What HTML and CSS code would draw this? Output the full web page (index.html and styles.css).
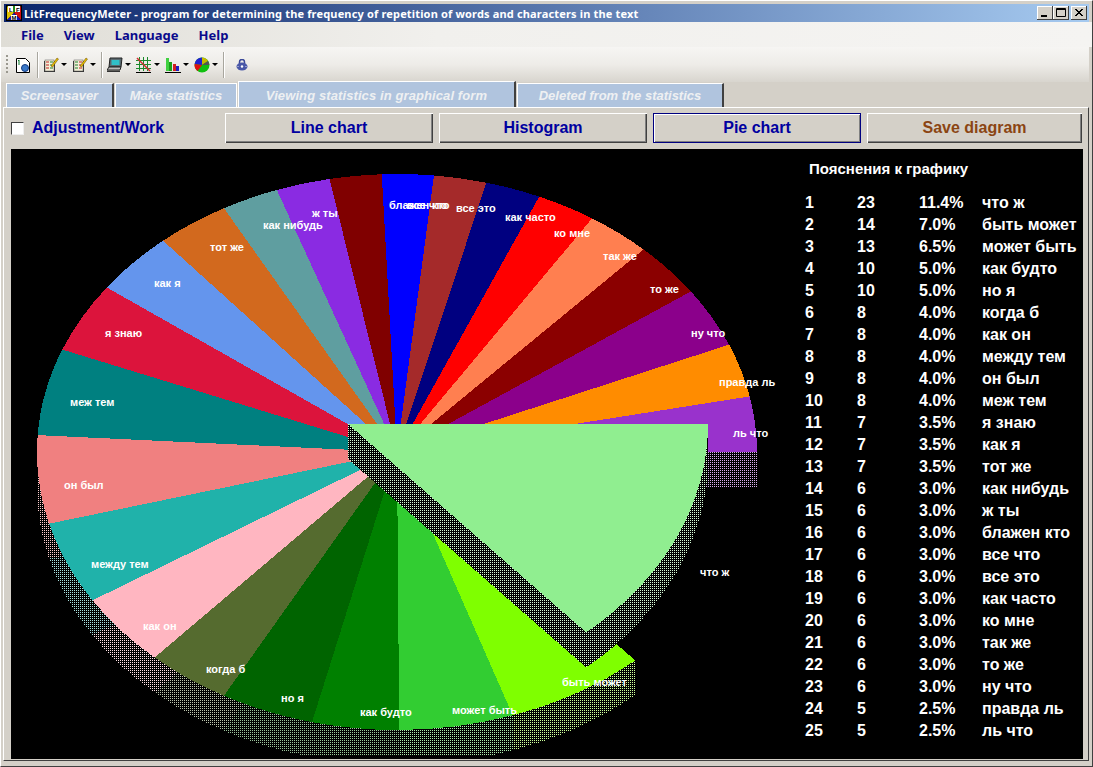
FILE: index.html
```html
<!DOCTYPE html>
<html lang="en">
  <head>
    <meta charset="UTF-8" />
    <title>LitFrequencyMeter</title>
    <link rel="stylesheet" href="styles.css">
  </head>
  <body>
    <div class="window">
      <div class="titlebar">
        <svg class="app-icon" viewBox="0 0 16 16" width="16" height="16">
          <rect width="16" height="16" fill="#000"/>
          <path d="M1 1h14L8 8z" fill="#1c8a1c"/>
          <path d="M1 1v14l7-7z" fill="#e0c000"/>
          <path d="M15 1v14L8 8z" fill="#d01010"/>
          <path d="M1 15h14L8 8z" fill="#1010c0"/>
          <rect x="2" y="1" width="5" height="6" fill="#fff"/>
          <rect x="9" y="1" width="5" height="6" fill="#fff"/>
          <rect x="5" y="10" width="6" height="5" fill="#fff"/>
          <text x="3" y="6.5" class="app-letter">L</text>
          <text x="10" y="6.5" class="app-letter">F</text>
          <text x="5.5" y="14.5" class="app-letter">M</text>
        </svg>
        <span class="title-text">LitFrequencyMeter - program for determining the frequency of repetition of words and characters in the text</span>
        <div class="caption-buttons">
          <button class="caption-btn"><svg viewBox="0 0 16 14" width="16" height="14"><rect x="4" y="9" width="6" height="2" fill="#000"/></svg></button>
          <button class="caption-btn"><svg viewBox="0 0 16 14" width="16" height="14"><path d="M3.5 2.5h9v8h-9z M3 3.5h10" fill="none" stroke="#000"/></svg></button>
          <button class="caption-btn caption-close"><svg viewBox="0 0 16 14" width="16" height="14"><path d="M4 3l7 7M5 3l7 7M11 3l-7 7M12 3l-7 7" stroke="#000" fill="none"/></svg></button>
        </div>
      </div>

      <nav class="menubar">
        <span>File</span>
        <span>View</span>
        <span>Language</span>
        <span>Help</span>
      </nav>

      <div class="toolbar">
        <span class="grip"></span>
        <svg class="tool" viewBox="0 0 16 16" width="16" height="16">
          <path d="M1.5 1.5h9l4 4v10h-13z" fill="#fff" stroke="#000"/>
          <path d="M4 3v5M3 4l1-1" stroke="#0a7a2a" fill="none"/>
          <circle cx="10" cy="11" r="3.5" fill="#3a78c8" stroke="#123a80"/>
        </svg>
        <span class="sep"></span>
        <span class="tool-drop">
          <svg class="tool" viewBox="0 0 16 16" width="16" height="16">
            <path d="M1 4h11v11H1z" fill="#333"/>
            <rect x="2" y="3" width="9" height="11" fill="#f4f0d8" stroke="#555" stroke-width=".5"/>
            <path d="M3 5h3M3 8h3M3 11h3" stroke="#c02020"/>
            <path d="M7 5h3M7 8h2M7 11h3" stroke="#208030"/>
            <path d="M8 9l6-8 1.500 1-6 8z" fill="#e8c000" stroke="#604000" stroke-width=".5"/>
          </svg>
          <i class="arrow"></i>
        </span>
        <span class="tool-drop">
          <svg class="tool" viewBox="0 0 16 16" width="16" height="16">
            <path d="M1 4h11v11H1z" fill="#333"/>
            <rect x="2" y="3" width="9" height="11" fill="#f4f0d8" stroke="#555" stroke-width=".5"/>
            <path d="M3 5h3M3 8h3M3 11h3" stroke="#208030"/>
            <path d="M7 5h3M7 8h2M7 11h3" stroke="#c02020"/>
            <path d="M8 9l6-8 1.500 1-6 8z" fill="#e8c000" stroke="#604000" stroke-width=".5"/>
          </svg>
          <i class="arrow"></i>
        </span>
        <span class="sep sep-wide"></span>
        <span class="tool-drop">
          <svg class="tool" viewBox="0 0 16 16" width="16" height="16">
            <path d="M3 1h12l-1 9H2z" fill="#5a6a70" stroke="#222"/>
            <rect x="4.500" y="3" width="8" height="5" fill="#30c0c8"/>
            <path d="M2 10h12l-1 3H0z" fill="#bbb" stroke="#222"/>
            <path d="M0 13.500h13v1.500H0z" fill="#333"/>
          </svg>
          <i class="arrow"></i>
        </span>
        <span class="tool-drop">
          <svg class="tool" viewBox="0 0 16 16" width="16" height="16">
            <path d="M0 3.500h15M0 7.500h15M0 11.500h15M3.500 0v14M7.500 0v14M11.500 0v14" stroke="#1a8a2a" fill="none"/>
            <path d="M1 1l13 13" stroke="#d03030" stroke-width="1.500"/>
            <path d="M0 15.500h15" stroke="#000"/>
          </svg>
          <i class="arrow"></i>
        </span>
        <span class="tool-drop">
          <svg class="tool" viewBox="0 0 16 16" width="16" height="16">
            <rect x="1" y="1" width="3" height="13" fill="#40d040"/>
            <rect x="4" y="5" width="3" height="9" fill="#18a018"/>
            <rect x="8" y="7" width="3" height="7" fill="#d02020"/>
            <rect x="11" y="9" width="3" height="5" fill="#2020c0"/>
            <path d="M0 15.500h16" stroke="#000"/>
          </svg>
          <i class="arrow"></i>
        </span>
        <span class="tool-drop">
          <svg class="tool" viewBox="0 0 16 16" width="16" height="16">
            <circle cx="8" cy="8" r="7.500" fill="#10c010"/>
            <path d="M8 8V.5A7.500 7.500 0 0 0 .6 7z" fill="#2020d0"/>
            <path d="M8 8L.6 7a7.500 7.500 0 0 0 3 7z" fill="#e01010"/>
            <path d="M8 8V.5a7.500 7.500 0 0 1 6 3.500z" fill="#c8b800"/>
            <path d="M8 8l6-4a7.500 7.500 0 0 1 1.400 4z" fill="#555"/>
          </svg>
          <i class="arrow"></i>
        </span>
        <span class="sep sep-last"></span>
        <svg class="tool-lock" viewBox="0 0 12 12" width="12" height="12">
          <path d="M3.500 5V3a2.500 2.500 0 0 1 5 0v2" fill="none" stroke="#3a4898" stroke-width="1.500"/>
          <ellipse cx="6" cy="7.500" rx="5.500" ry="4" fill="#4a58a8"/>
          <circle cx="6" cy="7.500" r="1.200" fill="#fff"/>
          <path d="M1.500 7.500h1M9.500 7.500h1" stroke="#dde" fill="none"/>
        </svg>
      </div>

      <div class="tabs">
        <div class="tab tab-first">Screensaver</div>
        <div class="tab tab-make">Make statistics</div>
        <div class="tab tab-active">Viewing statistics in graphical form</div>
        <div class="tab tab-deleted">Deleted from the statistics</div>
      </div>

      <div class="panel">
        <div class="controls">
          <label class="adjust"><span class="checkbox"></span>Adjustment/Work</label>
          <button class="btn btn-line">Line chart</button>
          <button class="btn btn-hist">Histogram</button>
          <button class="btn btn-pie">Pie chart</button>
          <button class="btn btn-save">Save diagram</button>
        </div>
        <div class="canvas">
          <svg id="pie" class="pie" viewBox="11 149 780 607" width="780" height="607"></svg>
          <aside class="legend">
            <h4 class="legend-title">Пояснения к графику</h4>
            <div id="legendRows" class="legend-rows"></div>
          </aside>
        </div>
      </div>
    </div>
    <script src="chart.js"></script>
  </body>
</html>
```

FILE: styles.css
```css
* {
  box-sizing: border-box;
}

body {
  margin: 0;
  background: #d4d0c8;
  font-family: "Liberation Sans", Arial, sans-serif;
  overflow: hidden;
}

.window {
  width: 1093px;
  height: 767px;
  padding: 4px 4px 0;
  background: #d4d0c8;
  border: 1px solid #fff;
  border-right-color: #404040;
  border-bottom-color: #404040;
  display: flex;
  flex-direction: column;
}

.titlebar {
  height: 18px;
  flex: none;
  margin-top: -1px;
  margin-left: -1px;
  margin-right: -1px;
  padding: 0 2px 0 2px;
  display: flex;
  align-items: center;
  background: linear-gradient(to right, #0a246a, #a6caf0);
}

.app-icon {
  flex: none;
}

.app-letter {
  font: bold 6px "Liberation Sans", sans-serif;
  fill: #000;
}

.title-text {
  margin-left: 2px;
  color: #fff;
  font: bold 11px "Noto Sans", sans-serif;
  letter-spacing: 0.16px;
  white-space: nowrap;
}

.caption-buttons {
  margin-left: auto;
  display: flex;
}

.caption-btn {
  width: 16px;
  height: 14px;
  padding: 0;
  background: #d4d0c8;
  border: none;
  box-shadow: inset -1px -1px 0 #404040, inset 1px 1px 0 #fff;
  display: block;
}

.caption-btn svg {
  display: block;
}

.caption-close {
  margin-left: 2px;
}

.menubar {
  height: 25px;
  flex: none;
  margin: 0 -4px;
  padding: 0 0 0 20px;
  display: flex;
  align-items: center;
  gap: 20px;
  background: linear-gradient(to right, #dfddd6, #f1f0ed 40%, #f5f4f2);
  color: #0a0a8c;
  font: bold 13px "Noto Sans", sans-serif;
}

.toolbar {
  height: 35px;
  flex: none;
  margin: 0 -1px 0 -4px;
  padding: 0 0 0 5px;
  display: flex;
  align-items: center;
  background: linear-gradient(to bottom, #f6f5f3, #eeece8 50%, #d8d5ce);
}

.grip {
  width: 2px;
  height: 20px;
  margin-right: 7px;
  background: repeating-linear-gradient(to bottom, #9a988f 0 2px, transparent 2px 4px);
}

.tool {
  display: block;
  flex: none;
}

.tool-lock {
  flex: none;
  margin-left: 7px;
}

.tool-drop {
  width: 29px;
  flex: none;
  display: flex;
  align-items: center;
}

.arrow {
  width: 0;
  height: 0;
  margin-left: 2px;
  border: 3px solid transparent;
  border-top-color: #000;
  border-bottom: 0;
}

.sep {
  width: 1px;
  height: 26px;
  margin: 0 5px 0 6px;
  background: #a8a69e;
  box-shadow: 1px 0 0 #fff;
}

.sep-wide {
  margin-left: 0;
}

.sep-last {
  margin-left: 0;
}

.tabs {
  height: 26px;
  flex: none;
  margin: -1px -2px 0 1px;
  display: flex;
  align-items: flex-end;
  gap: 1px;
}

.tab {
  height: 24px;
  padding-top: 4px;
  text-align: center;
  background: #b0c4de;
  color: #eef0f2;
  font: italic bold 13px "Liberation Sans", Arial, sans-serif;
  border-top: 1px solid #fff;
  border-left: 1px solid #fff;
  border-right: 2px solid #404040;
}

.tab-first {
  width: 108px;
}

.tab-make {
  width: 122px;
  border-right: 1px solid #fff;
}

.tab-active {
  width: 278px;
  height: 26px;
  padding-top: 6px;
  letter-spacing: 0.1px;
}

.tab-deleted {
  width: 207px;
}

.panel {
  flex: 1;
  min-height: 0;
  margin: 0 -1px 5px -2px;
  padding: 5px 5px 1px 7px;
  border-top: 1px solid #fff;
  border-left: 1px solid #fff;
  border-right: 1px solid #404040;
  border-bottom: 1px solid #404040;
  display: flex;
  flex-direction: column;
}

.controls {
  height: 30px;
  flex: none;
  display: flex;
  gap: 6px;
  align-items: stretch;
}

.adjust {
  width: 208px;
  display: flex;
  align-items: center;
  color: #0000a0;
  font-size: 16px;
  font-weight: bold;
}

.checkbox {
  width: 13px;
  height: 13px;
  margin-right: 8px;
  background: #fff;
  border: 1px solid #404040;
  border-right-color: #eee;
  border-bottom-color: #eee;
}

.btn {
  width: 208px;
  padding: 0;
  background: #d4d0c8;
  border: none;
  box-shadow: inset 1px 1px 0 #fff, inset -1px -1px 0 #404040, inset -2px -2px 0 #808080;
  color: #0000a0;
  font: bold 16px "Liberation Sans", Arial, sans-serif;
}

.btn-pie {
  box-shadow: inset 0 0 0 1px #000080, inset 2px 2px 0 #fff, inset -2px -2px 0 #808080;
}

.btn-save {
  width: 215px;
  color: #8b4513;
}

.canvas {
  flex: 1;
  min-height: 0;
  margin-top: 6px;
  background: #000;
  display: flex;
  overflow: hidden;
}

.pie {
  display: block;
  flex: none;
}

.pie-label {
  font: bold 11px "Liberation Sans", Arial, sans-serif;
  fill: #fff;
  dominant-baseline: central;
}

.legend {
  flex: 1;
  color: #fff;
  font-weight: bold;
  font-size: 16px;
}

.legend-title {
  margin: 12px 0 0 18px;
  font-size: 15px;
  line-height: 16px;
}

.legend-rows {
  margin-top: 15px;
  margin-left: 14px;
}

.legend-row {
  height: 22px;
  line-height: 22px;
  display: grid;
  grid-template-columns: 52px 62px 63px 1fr;
  white-space: nowrap;
}
```

FILE: chart.js
```js
// words, counts, slice colours and the x / y where each label sits
const slices = [
  ["что ж", 23, "#90ee90", 700, 572],
  ["быть может", 14, "#7fff00", 562, 682],
  ["может быть", 13, "#32cd32", 452, 710],
  ["как будто", 10, "#008000", 360, 712],
  ["но я", 10, "#006400", 281, 698],
  ["когда б", 8, "#556b2f", 206, 669],
  ["как он", 8, "#ffb6c1", 143, 626],
  ["между тем", 8, "#20b2aa", 91, 564],
  ["он был", 8, "#f08080", 64, 485],
  ["меж тем", 8, "#008080", 70, 402],
  ["я знаю", 7, "#dc143c", 105, 333],
  ["как я", 7, "#6495ed", 154, 283],
  ["тот же", 7, "#d2691e", 210, 247],
  ["как нибудь", 6, "#5f9ea0", 263, 225],
  ["ж ты", 6, "#8a2be2", 312, 213],
  ["блажен кто", 6, "#800000", 389, 205],
  ["все что", 6, "#0000ff", 407, 205],
  ["все это", 6, "#a52a2a", 456, 208],
  ["как часто", 6, "#000080", 505, 217],
  ["ко мне", 6, "#ff0000", 554, 233],
  ["так же", 6, "#ff7f50", 603, 256],
  ["то же", 6, "#8b0000", 650, 289],
  ["ну что", 6, "#8b008b", 691, 333],
  ["правда ль", 5, "#ff8c00", 719, 382],
  ["ль что", 5, "#9932cc", 733, 433],
];

const CX = 397;
const CY = 452;
const RX = 360;
const RY = 278;
const DEPTH = 35;
const SVG_NS = "http://www.w3.org/2000/svg";

const svg = document.getElementById("pie");
const total = slices.reduce((sum, s) => sum + s[1], 0);

function add(parent, tag, attrs) {
  const el = document.createElementNS(SVG_NS, tag);
  for (const key in attrs) el.setAttribute(key, attrs[key]);
  parent.appendChild(el);
  return el;
}

// point on the ellipse along a real angle, not the ellipse parameter
function edgePoint(deg, dx, dy) {
  const a = (deg * Math.PI) / 180;
  const r = 1 / Math.hypot(Math.cos(a) / RX, Math.sin(a) / RY);
  return [CX + dx + r * Math.cos(a), CY + dy + r * Math.sin(a)];
}

function wedge(from, to, dx, dy) {
  const p = edgePoint(from, dx, dy);
  const q = edgePoint(to, dx, dy);
  return `M${CX + dx} ${CY + dy}L${p[0]} ${p[1]}A${RX} ${RY} 0 0 1 ${q[0]} ${q[1]}Z`;
}

// side wall of a slice: drop of the wedge, outer band and both straight edges
function rimParts(from, to, dx, dy) {
  const p = edgePoint(from, dx, dy);
  const q = edgePoint(to, dx, dy);
  const c = [CX + dx, CY + dy];
  return [
    wedge(from, to, dx, dy + DEPTH),
    `M${p[0]} ${p[1]}A${RX} ${RY} 0 0 1 ${q[0]} ${q[1]}V${q[1] + DEPTH}A${RX} ${RY} 0 0 0 ${p[0]} ${p[1] + DEPTH}Z`,
    `M${c[0]} ${c[1]}L${p[0]} ${p[1]}V${p[1] + DEPTH}L${c[0]} ${c[1] + DEPTH}Z`,
    `M${c[0]} ${c[1]}L${q[0]} ${q[1]}V${q[1] + DEPTH}L${c[0]} ${c[1] + DEPTH}Z`,
  ];
}

// dots on the wall read paler than the slice itself
function paler(hex) {
  const n = parseInt(hex.slice(1), 16);
  const mix = (v) => Math.round(v + (255 - v) * 0.6);
  return `rgb(${mix(n >> 16)},${mix((n >> 8) & 255)},${mix(n & 255)})`;
}

const defs = add(svg, "defs", {});
const rims = add(svg, "g", { "shape-rendering": "crispEdges" });
const faces = add(svg, "g", { "shape-rendering": "crispEdges" });
const top_ = add(svg, "g", { "shape-rendering": "crispEdges" });
const labels = add(svg, "g", {});

let angle = 0;
slices.forEach((s, i) => {
  const sweep = (s[1] * 360) / total;
  const pattern = add(defs, "pattern", {
    id: "hatch" + i,
    width: 2,
    height: 2,
    patternUnits: "userSpaceOnUse",
  });
  add(pattern, "rect", { width: 2, height: 2, fill: "#000" });
  add(pattern, "rect", { width: 1, height: 1, fill: paler(s[2]) });

  // the first slice is pulled out up and left and is painted over the rest
  const dx = i === 0 ? -49 : 0;
  const dy = i === 0 ? -28 : 0;
  const rimLayer = i === 0 ? top_ : rims;
  const faceLayer = i === 0 ? top_ : faces;
  rimParts(angle, angle + sweep, dx, dy).forEach((d) => {
    add(rimLayer, "path", { d: d, fill: `url(#hatch${i})` });
  });
  add(faceLayer, "path", { d: wedge(angle, angle + sweep, dx, dy), fill: s[2] });

  const label = add(labels, "text", { x: s[3], y: s[4], class: "pie-label" });
  label.textContent = s[0];
  angle += sweep;
});

const rows = slices
  .map((s, i) => {
    const pct = ((s[1] * 100) / total).toFixed(1);
    return `<div class="legend-row"><span>${i + 1}</span><span>${s[1]}</span><span>${pct}%</span><span>${s[0]}</span></div>`;
  })
  .join("");
document.getElementById("legendRows").innerHTML = rows;
```
